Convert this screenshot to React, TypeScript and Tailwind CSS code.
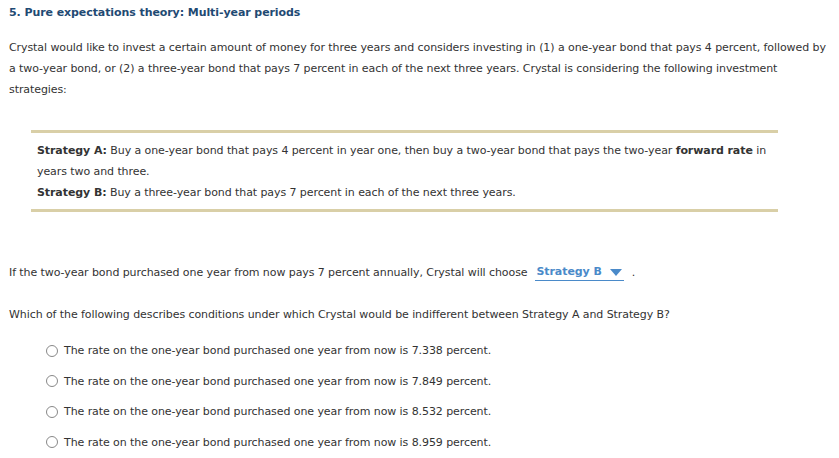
import { useState } from "react";

const options = [
  "The rate on the one-year bond purchased one year from now is 7.338 percent.",
  "The rate on the one-year bond purchased one year from now is 7.849 percent.",
  "The rate on the one-year bond purchased one year from now is 8.532 percent.",
  "The rate on the one-year bond purchased one year from now is 8.959 percent.",
];

export default function App() {
  const [selected, setSelected] = useState<number | null>(null);

  return (
    <div className="w-[839px] h-[458px] bg-white text-[11px] leading-[21px] tracking-[-0.08px] text-[#333] font-['DejaVu_Sans',Verdana,sans-serif] pl-[9px] pr-[8px] pt-[2px]">
      <h1 className="font-bold text-[#1f4a73] text-[11px] leading-[21px]">
        5. Pure expectations theory: Multi-year periods
      </h1>

      <p className="mt-[14px]">
        Crystal would like to invest a certain amount of money for three years and considers investing in (1) a
        one-year bond that pays 4 percent, followed by a two-year bond, or (2) a three-year bond that pays 7 percent
        in each of the next three years. Crystal is considering the following investment strategies:
      </p>

      <div className="ml-[22px] w-[747px] mt-[30px] border-t-[3px] border-b-[3px] border-[#d9cfa7] px-[6px] pt-[7px] pb-[6px]">
        <p>
          <span className="font-bold">Strategy A:</span> Buy a one-year bond that pays 4 percent in year one, then buy
          a two-year bond that pays the two-year <span className="font-bold">forward rate</span> in years two and
          three.
        </p>
        <p>
          <span className="font-bold">Strategy B:</span> Buy a three-year bond that pays 7 percent in each of the next
          three years.
        </p>
      </div>

      <p className="mt-[50px] flex items-center">
        If the two-year bond purchased one year from now pays 7 percent annually, Crystal will choose
        <span className="ml-[7px] inline-flex items-center gap-[8px] border-b border-[#4a8ac9] px-[2px] leading-[16px] font-bold text-[#4a8ac9]">
          Strategy B
          <svg width="12" height="7" viewBox="0 0 12 7">
            <path d="M0 0 L12 0 L6 7 Z" fill="#4a8ac9" />
          </svg>
        </span>
        <span className="ml-[8px]">.</span>
      </p>

      <p className="mt-[21px]">
        Which of the following describes conditions under which Crystal would be indifferent between Strategy A and
        Strategy B?
      </p>

      <div className="mt-[15px] ml-[37px] flex flex-col gap-[9.5px]">
        {options.map((opt, i) => (
          <label key={i} className="flex items-center gap-[6px] cursor-pointer">
            <span
              onClick={() => setSelected(i)}
              className="w-[12px] h-[12px] rounded-full border border-[#888] flex items-center justify-center"
            >
              {selected === i ? <span className="w-[6px] h-[6px] rounded-full bg-[#333]" /> : null}
            </span>
            <span>{opt}</span>
          </label>
        ))}
      </div>
    </div>
  );
}
